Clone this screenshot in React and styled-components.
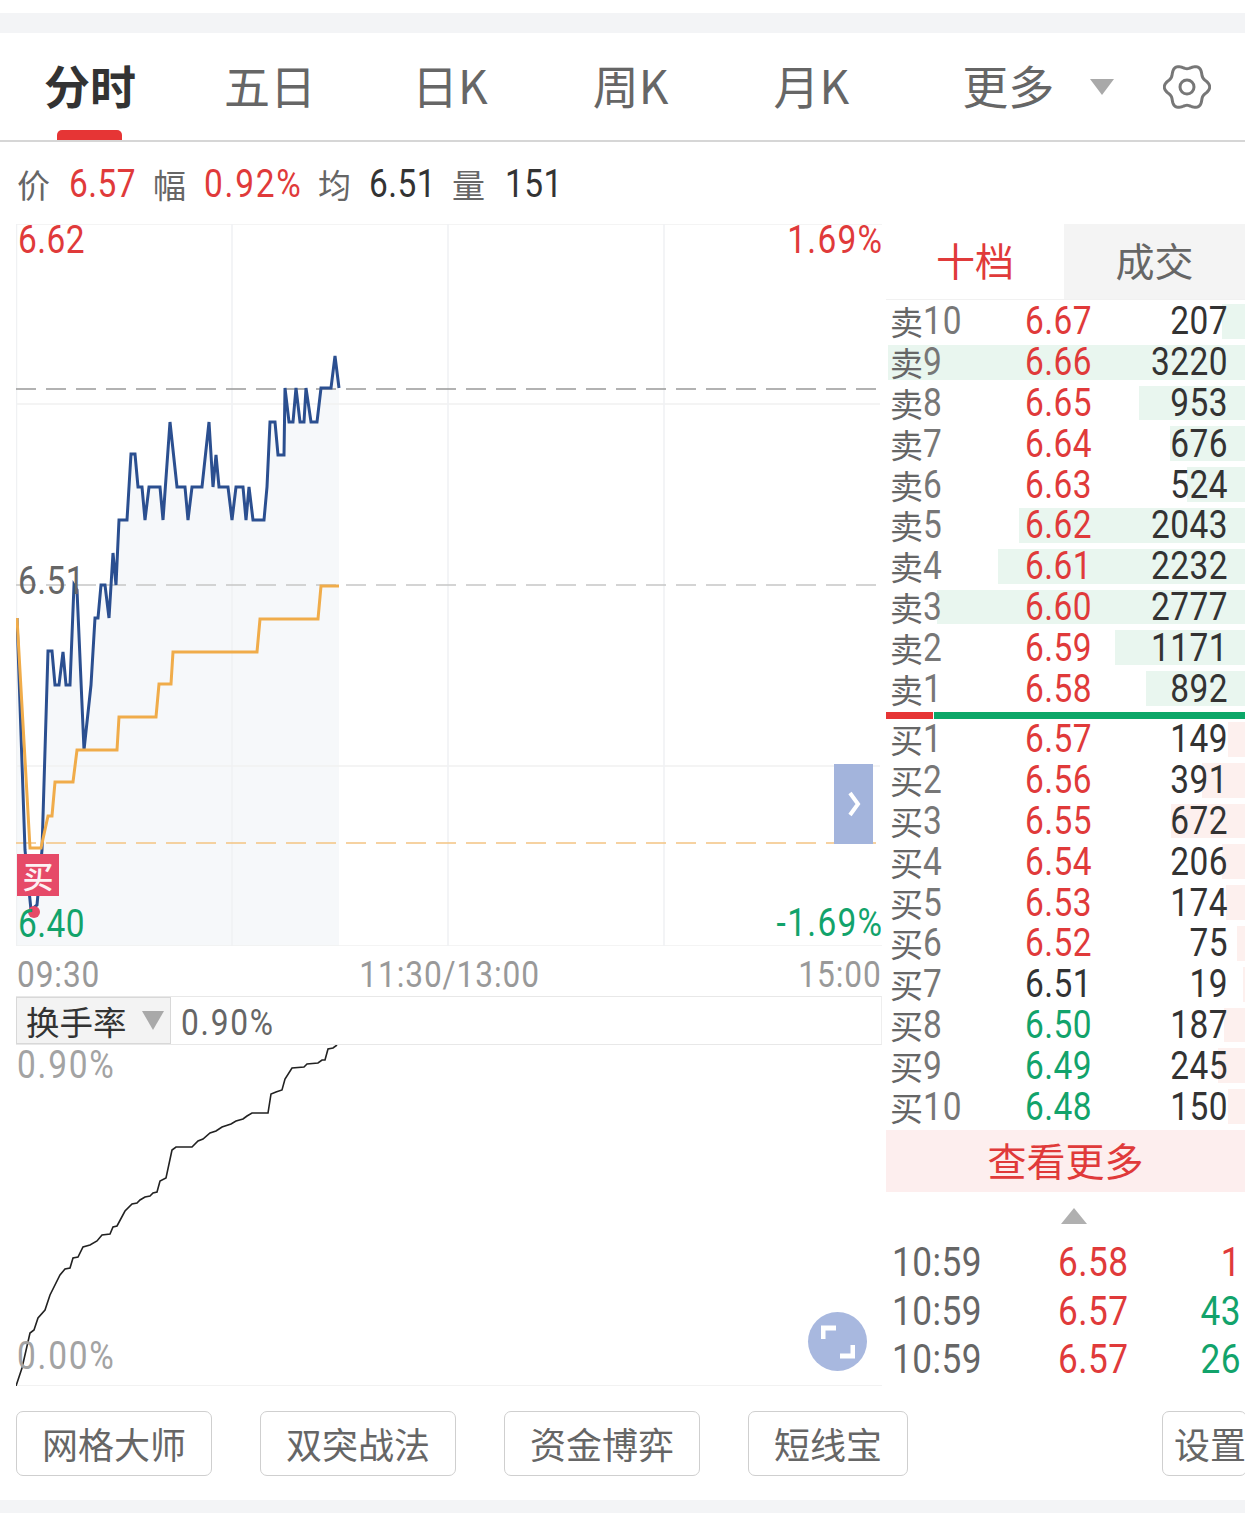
import React from "react";
import styled, { createGlobalStyle } from "styled-components";

const CJK = '"Noto Sans CJK SC", "Noto Sans", sans-serif';
const DIGITS = 'Roboto, "Noto Sans", sans-serif';
const RED = "#e03a3a";
const GREEN = "#12a36b";
const TONES = { red: RED, green: GREEN, dark: "#333", mid: "#666", soft: "#a3a3a3", axis: "#999", label: "#777" };

const GlobalStyle = createGlobalStyle`
  html, body {
    margin: 0;
    background: #fff;
    overflow: hidden;
  }
  body {
    font-family: ${CJK};
  }
`;

const Page = styled.div`
  width: 1245px;
  height: 1513px;
  padding-top: 13px;
  box-sizing: border-box;
  overflow: hidden;
  display: flex;
  flex-direction: column;
`;

const Band = styled.div`
  height: ${(p) => p.$h}px;
  flex: none;
  background: #f3f4f6;
`;

const TabBar = styled.div`
  height: 109px;
  box-sizing: border-box;
  flex: none;
  display: flex;
  align-items: center;
  border-bottom: 2px solid #d6d6d6;
  position: relative;
`;

const Tab = styled.div`
  margin: 0 0 6px ${(p) => p.$ml}px;
  font-size: 46px;
  line-height: 60px;
  font-weight: ${(p) => (p.$active ? 700 : 400)};
  color: ${(p) => (p.$active ? "#333" : "#666")};
  white-space: nowrap;
`;

const TabMark = styled.div`
  position: absolute;
  left: 57px;
  bottom: 0;
  width: 65px;
  height: 10px;
  border-radius: 5px 5px 0 0;
  background: #e63535;
`;

const Caret = styled.div`
  width: 0;
  height: 0;
  margin-left: ${(p) => p.$ml}px;
  border-left: ${(p) => p.$size}px solid transparent;
  border-right: ${(p) => p.$size}px solid transparent;
  border-top: ${(p) => p.$tall}px solid #a9a9a9;
`;

const GearBox = styled.svg`
  margin-left: 49px;
  flex: none;
`;

const InfoRow = styled.div`
  height: 82px;
  flex: none;
  box-sizing: border-box;
  padding: 2px 0 0 17px;
  display: grid;
  grid-template-columns: 52px 84px 51px 114px 51px 83px 53px 80px;
  align-items: center;
`;

const InfoKey = styled.span`
  font-size: 33px;
  line-height: 40px;
  color: #666;
`;

// the reference digits are a narrow DIN cut, so Roboto is squeezed to fit
const Num = styled.span`
  display: inline-block;
  font-family: ${DIGITS};
  font-size: ${(p) => p.$size || 38}px;
  letter-spacing: ${(p) => (p.$track === undefined ? 0.5 : p.$track)}px;
  line-height: 36px;
  color: ${(p) => TONES[p.$tone] || "#333"};
  white-space: nowrap;
  transform: scaleX(0.88);
  transform-origin: ${(p) => p.$origin || "left"} center;
`;

const Main = styled.div`
  flex: none;
  height: 1162px;
  padding-left: 16px;
  display: flex;
  gap: 4px;
`;

const LeftCol = styled.div`
  width: 866px;
  flex: none;
  display: flex;
  flex-direction: column;
`;

const PriceChart = styled.div`
  height: 722px;
  position: relative;
  flex: none;
`;

const Volume = styled.div`
  height: 341px;
  position: relative;
  flex: none;
  border-bottom: 1px solid #f2f2f2;
  box-sizing: border-box;
`;

const Plot = styled.svg`
  display: block;
  position: absolute;
  left: 0;
  top: 0;
`;

const Tag = styled(Num)`
  position: absolute;
  left: ${(p) => (p.$left === undefined ? "auto" : `${p.$left}px`)};
  right: ${(p) => (p.$right === undefined ? "auto" : `${p.$right}px`)};
  top: ${(p) => p.$top}px;
`;

const BuyBadge = styled.div`
  position: absolute;
  left: 1px;
  top: 630px;
  width: 42px;
  height: 42px;
  background: #e64a68;
  color: #fdf1f3;
  font-size: 31px;
  font-weight: 500;
  line-height: 42px;
  text-align: center;
`;

const BuyDot = styled.div`
  position: absolute;
  left: 12px;
  top: 682px;
  width: 12px;
  height: 12px;
  border-radius: 50%;
  background: #e64a68;
`;

const SlideTab = styled.div`
  position: absolute;
  left: 818px;
  top: 540px;
  width: 39px;
  height: 80px;
  background: #a3b4dc;
  display: flex;
  align-items: center;
  justify-content: center;
`;

const AxisRow = styled.div`
  height: 50px;
  flex: none;
  display: flex;
  justify-content: space-between;
  align-items: center;
  padding: 8px 0 0 1px;
  box-sizing: border-box;
`;

const SelectBar = styled.div`
  height: 49px;
  flex: none;
  box-sizing: border-box;
  display: flex;
  align-items: center;
  border-top: 1px solid #e8e8e8;
  border-bottom: 1px solid #e8e8e8;
  border-right: 1px solid #eee;
`;

const Picker = styled.div`
  width: 155px;
  height: 100%;
  flex: none;
  box-sizing: border-box;
  padding-left: 9px;
  background: #f3f3f3;
  border: 1px solid #d8d8d8;
  display: flex;
  align-items: center;
  font-size: 33.5px;
  color: #333;
`;

const PickerValue = styled(Num)`
  margin: 4px 0 0 10px;
`;

const FullScreen = styled.div`
  position: absolute;
  left: 792px;
  top: 267px;
  width: 59px;
  height: 59px;
  border-radius: 50%;
  background: #a8b8df;
  display: flex;
  align-items: center;
  justify-content: center;
`;

const RightCol = styled.div`
  flex: 1;
  min-width: 0;
  display: flex;
  flex-direction: column;
`;

const BookTabs = styled.div`
  height: 76px;
  flex: none;
  display: flex;
  margin-bottom: 1px;
  border-bottom: 1px solid #f1f1f1;
  box-sizing: border-box;
`;

const BookTab = styled.div`
  flex: ${(p) => (p.$on ? "0 0 178px" : 1)};
  display: flex;
  align-items: center;
  justify-content: center;
  padding-bottom: 5px;
  font-size: 39px;
  color: ${(p) => (p.$on ? RED : "#666")};
  background: ${(p) => (p.$on ? "#fff" : "#f4f4f4")};
`;

const Level = styled.div`
  height: 40.8px;
  position: relative;
  display: grid;
  grid-template-columns: 135px 76px 127px;
  align-items: center;
  padding-left: 4px;
`;

const Depth = styled.div`
  position: absolute;
  right: 0;
  top: 3px;
  bottom: 3px;
  background: ${(p) => (p.$side === "ask" ? "#e9f6ef" : "#fdf0ee")};
`;

const LevelName = styled.div`
  position: relative;
  display: flex;
  align-items: center;
  font-size: 33px;
  line-height: 36px;
  color: #666;
`;

const Cell = styled(Num)`
  position: relative;
  text-align: ${(p) => p.$align || "left"};
  transform-origin: ${(p) => p.$align || "left"} center;
`;

const Split = styled.div`
  height: 7px;
  margin: 3px 0 0;
  flex: none;
  display: flex;
  gap: 1px;
`;

const SplitPart = styled.div`
  flex: ${(p) => p.$grow};
  background: ${(p) => p.$color};
`;

const MoreButton = styled.div`
  height: 62px;
  margin-top: 3px;
  padding-bottom: 3px;
  box-sizing: border-box;
  flex: none;
  background: #fdeeee;
  color: ${RED};
  font-size: 39px;
  display: flex;
  align-items: center;
  justify-content: center;
`;

const CaretSlot = styled.div`
  height: 47px;
  flex: none;
  padding: 16px 0 0 175px;
  box-sizing: border-box;
`;

const CaretUp = styled.div`
  width: 0;
  height: 0;
  border-left: 13px solid transparent;
  border-right: 13px solid transparent;
  border-bottom: 16px solid #b0b0b0;
`;

const Trade = styled.div`
  height: 48.5px;
  display: grid;
  grid-template-columns: 166px 85px 98px;
  align-items: center;
  padding-left: 6px;
`;

const ActionRow = styled.div`
  flex: none;
  height: 114px;
  display: flex;
  gap: 48px;
  padding: 25px 0 0 16px;
  box-sizing: border-box;
  overflow: hidden;
`;

const ActionButton = styled.div`
  height: 65px;
  flex: none;
  box-sizing: border-box;
  padding: 0 ${(p) => (p.$tail ? 0 : 25)}px 0 ${(p) => (p.$tail ? 11 : 25)}px;
  margin-left: ${(p) => p.$ml || 0}px;
  border: 1px solid #cfcfcf;
  border-radius: 7px;
  font-size: 36px;
  line-height: 63px;
  color: #666;
  white-space: nowrap;
`;

const line = (pts) => pts.map((p) => p.join(",")).join(" ");

const blue = [
  [17, 618], [25, 850], [31, 910], [37, 905], [42, 850], [48, 651], [52, 651], [55, 685], [59, 685], [63, 652],
  [66, 685], [70, 685], [74, 585], [77, 590], [84, 750], [91, 685], [95, 618], [98, 618], [101, 585], [105, 585],
  [109, 618], [113, 553], [116, 585], [119, 520], [127, 520], [131, 454], [135, 454], [138, 487], [142, 487],
  [145, 520], [149, 487], [160, 487], [163, 520], [170, 422], [177, 487], [185, 487], [188, 520], [192, 487],
  [202, 487], [209, 422], [213, 487], [216, 455], [219, 487], [228, 487], [232, 520], [236, 487], [243, 487],
  [246, 520], [249, 487], [253, 520], [264, 520], [267, 487], [270, 422], [275, 422], [278, 455], [284, 455],
  [285, 388], [289, 422], [293, 422], [296, 388], [300, 422], [304, 422], [306, 388], [311, 422], [317, 422],
  [321, 388], [331, 388], [335, 356], [339, 388],
];

const orange = [
  [17, 618], [30, 848], [41, 848], [48, 816], [52, 816], [55, 782], [73, 782], [77, 750], [117, 750], [119, 717],
  [156, 717], [159, 684], [171, 684], [173, 652], [257, 652], [260, 619], [318, 619], [321, 586], [339, 586],
];

const turnover = [
  [16, 1386], [22, 1368], [30, 1333], [34, 1330], [38, 1318], [45, 1310], [50, 1295], [60, 1275], [65, 1269],
  [70, 1268], [73, 1258], [78, 1257], [83, 1247], [90, 1245], [97, 1241], [102, 1235], [110, 1234], [113, 1227],
  [117, 1226], [125, 1211], [132, 1204], [137, 1203], [140, 1200], [145, 1197], [150, 1196], [153, 1193],
  [157, 1192], [160, 1181], [166, 1178], [172, 1150], [176, 1147], [192, 1147], [198, 1141], [203, 1139],
  [210, 1133], [216, 1131], [222, 1127], [231, 1124], [236, 1121], [243, 1119], [247, 1116], [252, 1113],
  [268, 1113], [271, 1094], [276, 1092], [282, 1090], [285, 1079], [292, 1068], [304, 1067], [307, 1064],
  [318, 1063], [322, 1060], [325, 1060], [328, 1049], [333, 1048], [337, 1045],
];

// scalloped gear outline, six lobes
const gearPath = Array.from({ length: 121 }, (_, i) => {
  const a = (i / 120) * Math.PI * 2;
  const r = 20.5 + 2.2 * Math.cos(6 * a);
  return `${i ? "L" : "M"}${(24 + r * Math.cos(a)).toFixed(2)} ${(24 + r * Math.sin(a)).toFixed(2)}`;
}).join(" ") + "Z";

const tabs = [
  { label: "分时", ml: 44, active: true },
  { label: "五日", ml: 88 },
  { label: "日K", ml: 96 },
  { label: "周K", ml: 105 },
  { label: "月K", ml: 105 },
  { label: "更多", ml: 113 },
];

const asks = [
  ["10", "6.67", 207], ["9", "6.66", 3220], ["8", "6.65", 953], ["7", "6.64", 676], ["6", "6.63", 524],
  ["5", "6.62", 2043], ["4", "6.61", 2232], ["3", "6.60", 2777], ["2", "6.59", 1171], ["1", "6.58", 892],
];

const bids = [
  ["1", "6.57", 149, "red"], ["2", "6.56", 391, "red"], ["3", "6.55", 672, "red"], ["4", "6.54", 206, "red"],
  ["5", "6.53", 174, "red"], ["6", "6.52", 75, "red"], ["7", "6.51", 19, "dark"], ["8", "6.50", 187, "green"],
  ["9", "6.49", 245, "green"], ["10", "6.48", 150, "green"],
];

const trades = [
  ["6.58", "1", "red"],
  ["6.57", "43", "green"],
  ["6.57", "26", "green"],
];

const actions = ["网格大师", "双突战法", "资金博弈", "短线宝"];

const BookLevel = ({ side, name, no, price, vol, tone }) => (
  <Level>
    <Depth $side={side} style={{ width: `${(vol * 357) / 3220}px` }} />
    <LevelName>
      {name}
      <Num $tone="label" $track={1}>{no}</Num>
    </LevelName>
    <Cell $tone={tone}>{price}</Cell>
    <Cell $align="right">{vol}</Cell>
  </Level>
);

export default function App() {
  return (
    <Page>
      <GlobalStyle />
      <Band $h={20} />
      <TabBar>
        {tabs.map((t) => (
          <Tab key={t.label} $ml={t.ml} $active={t.active}>{t.label}</Tab>
        ))}
        <Caret $ml={36} $size={12} $tall={16} />
        <GearBox width="48" height="48" viewBox="0 0 48 48" fill="none" stroke="#777" strokeWidth="3">
          <path d={gearPath} />
          <circle cx="24" cy="24" r="7" />
        </GearBox>
        <TabMark />
      </TabBar>

      <InfoRow>
        <InfoKey>价</InfoKey>
        <Num $tone="red">6.57</Num>
        <InfoKey>幅</InfoKey>
        <Num $tone="red" $track={2}>0.92%</Num>
        <InfoKey>均</InfoKey>
        <Num>6.51</Num>
        <InfoKey>量</InfoKey>
        <Num>151</Num>
      </InfoRow>

      <Main>
        <LeftCol>
          <PriceChart>
            <Plot width="866" height="722" viewBox="16 224 866 722" fill="none">
              <polygon points={`17,946 ${line(blue)} 339,946`} fill="#f6f8fa" stroke="none" />
              <path d="M16 224H882M16 404H880M16 766H880M16 946H882" stroke="#f1f1f1" strokeWidth="1.5" />
              <path d="M16.5 224V946M232 224V946M448 224V946M664 224V946" stroke="#f0f1f3" strokeWidth="1.5" />
              <path d="M16 389H880" stroke="#999" strokeWidth="1.5" strokeDasharray="20 10" />
              <path d="M16 585H880" stroke="#c6c6c6" strokeWidth="1.5" strokeDasharray="20 10" />
              <path d="M16 843H880" stroke="#f3c383" strokeWidth="1.5" strokeDasharray="20 10" />
              <polyline points={line(blue)} stroke="#2b4f90" strokeWidth="3" strokeLinejoin="miter" />
              <polyline points={line(orange)} stroke="#f0ac4a" strokeWidth="3" />
            </Plot>
            <Tag $left={2} $top={-2} $tone="red">6.62</Tag>
            <Tag $right={-1} $top={-2} $tone="red" $track={1.5} $origin="right">1.69%</Tag>
            <Tag $left={2} $top={339} $tone="mid">6.51</Tag>
            <BuyBadge>买</BuyBadge>
            <BuyDot />
            <Tag $left={2} $top={682} $tone="green">6.40</Tag>
            <Tag $right={-1} $top={681} $tone="green" $track={1.5} $origin="right">-1.69%</Tag>
            <SlideTab>
              <svg width="16" height="28" viewBox="0 0 16 28" fill="none" stroke="#fff" strokeWidth="4">
                <path d="M4 3l8 11-8 11" />
              </svg>
            </SlideTab>
          </PriceChart>

          <AxisRow>
            <Num $tone="axis" $size={36} $track={1}>09:30</Num>
            <Num $tone="axis" $size={36} $track={1} $origin="center">11:30/13:00</Num>
            <Num $tone="axis" $size={36} $track={1} $origin="right">15:00</Num>
          </AxisRow>

          <SelectBar>
            <Picker>
              换手率
              <Caret $ml={15} $size={11} $tall={19} />
            </Picker>
            <PickerValue $tone="mid" $size={36} $track={2}>0.90%</PickerValue>
          </SelectBar>

          <Volume>
            <Plot width="866" height="341" viewBox="16 1045 866 341" fill="none">
              <polyline points={line(turnover)} stroke="#222" strokeWidth="1.6" />
            </Plot>
            <Tag $left={1} $top={2} $tone="soft" $track={2}>0.90%</Tag>
            <Tag $left={1} $top={293} $tone="soft" $track={2}>0.00%</Tag>
            <FullScreen>
              <svg width="34" height="34" viewBox="0 0 34 34" fill="none" stroke="#fff" strokeWidth="5">
                <path d="M2 14V3h13M32 20v11H19" />
              </svg>
            </FullScreen>
          </Volume>
        </LeftCol>

        <RightCol>
          <BookTabs>
            <BookTab $on>十档</BookTab>
            <BookTab>成交</BookTab>
          </BookTabs>
          {asks.map(([no, price, vol]) => (
            <BookLevel key={no} side="ask" name="卖" no={no} price={price} vol={vol} tone="red" />
          ))}
          <Split>
            <SplitPart $grow="0 0 47px" $color="#e63535" />
            <SplitPart $grow="1" $color="#0ca768" />
          </Split>
          {bids.map(([no, price, vol, tone]) => (
            <BookLevel key={no} side="bid" name="买" no={no} price={price} vol={vol} tone={tone} />
          ))}
          <MoreButton>查看更多</MoreButton>
          <CaretSlot>
            <CaretUp />
          </CaretSlot>
          {trades.map(([price, vol, tone], i) => (
            <Trade key={i}>
              <Num $tone="mid" $size={40}>10:59</Num>
              <Num $tone="red" $size={40}>{price}</Num>
              <Cell $tone={tone} $size={40} $align="right">{vol}</Cell>
            </Trade>
          ))}
        </RightCol>
      </Main>

      <ActionRow>
        {actions.map((a) => (
          <ActionButton key={a}>{a}</ActionButton>
        ))}
        <ActionButton $tail $ml={206}>设置</ActionButton>
      </ActionRow>
      <Band $h={13} />
    </Page>
  );
}
